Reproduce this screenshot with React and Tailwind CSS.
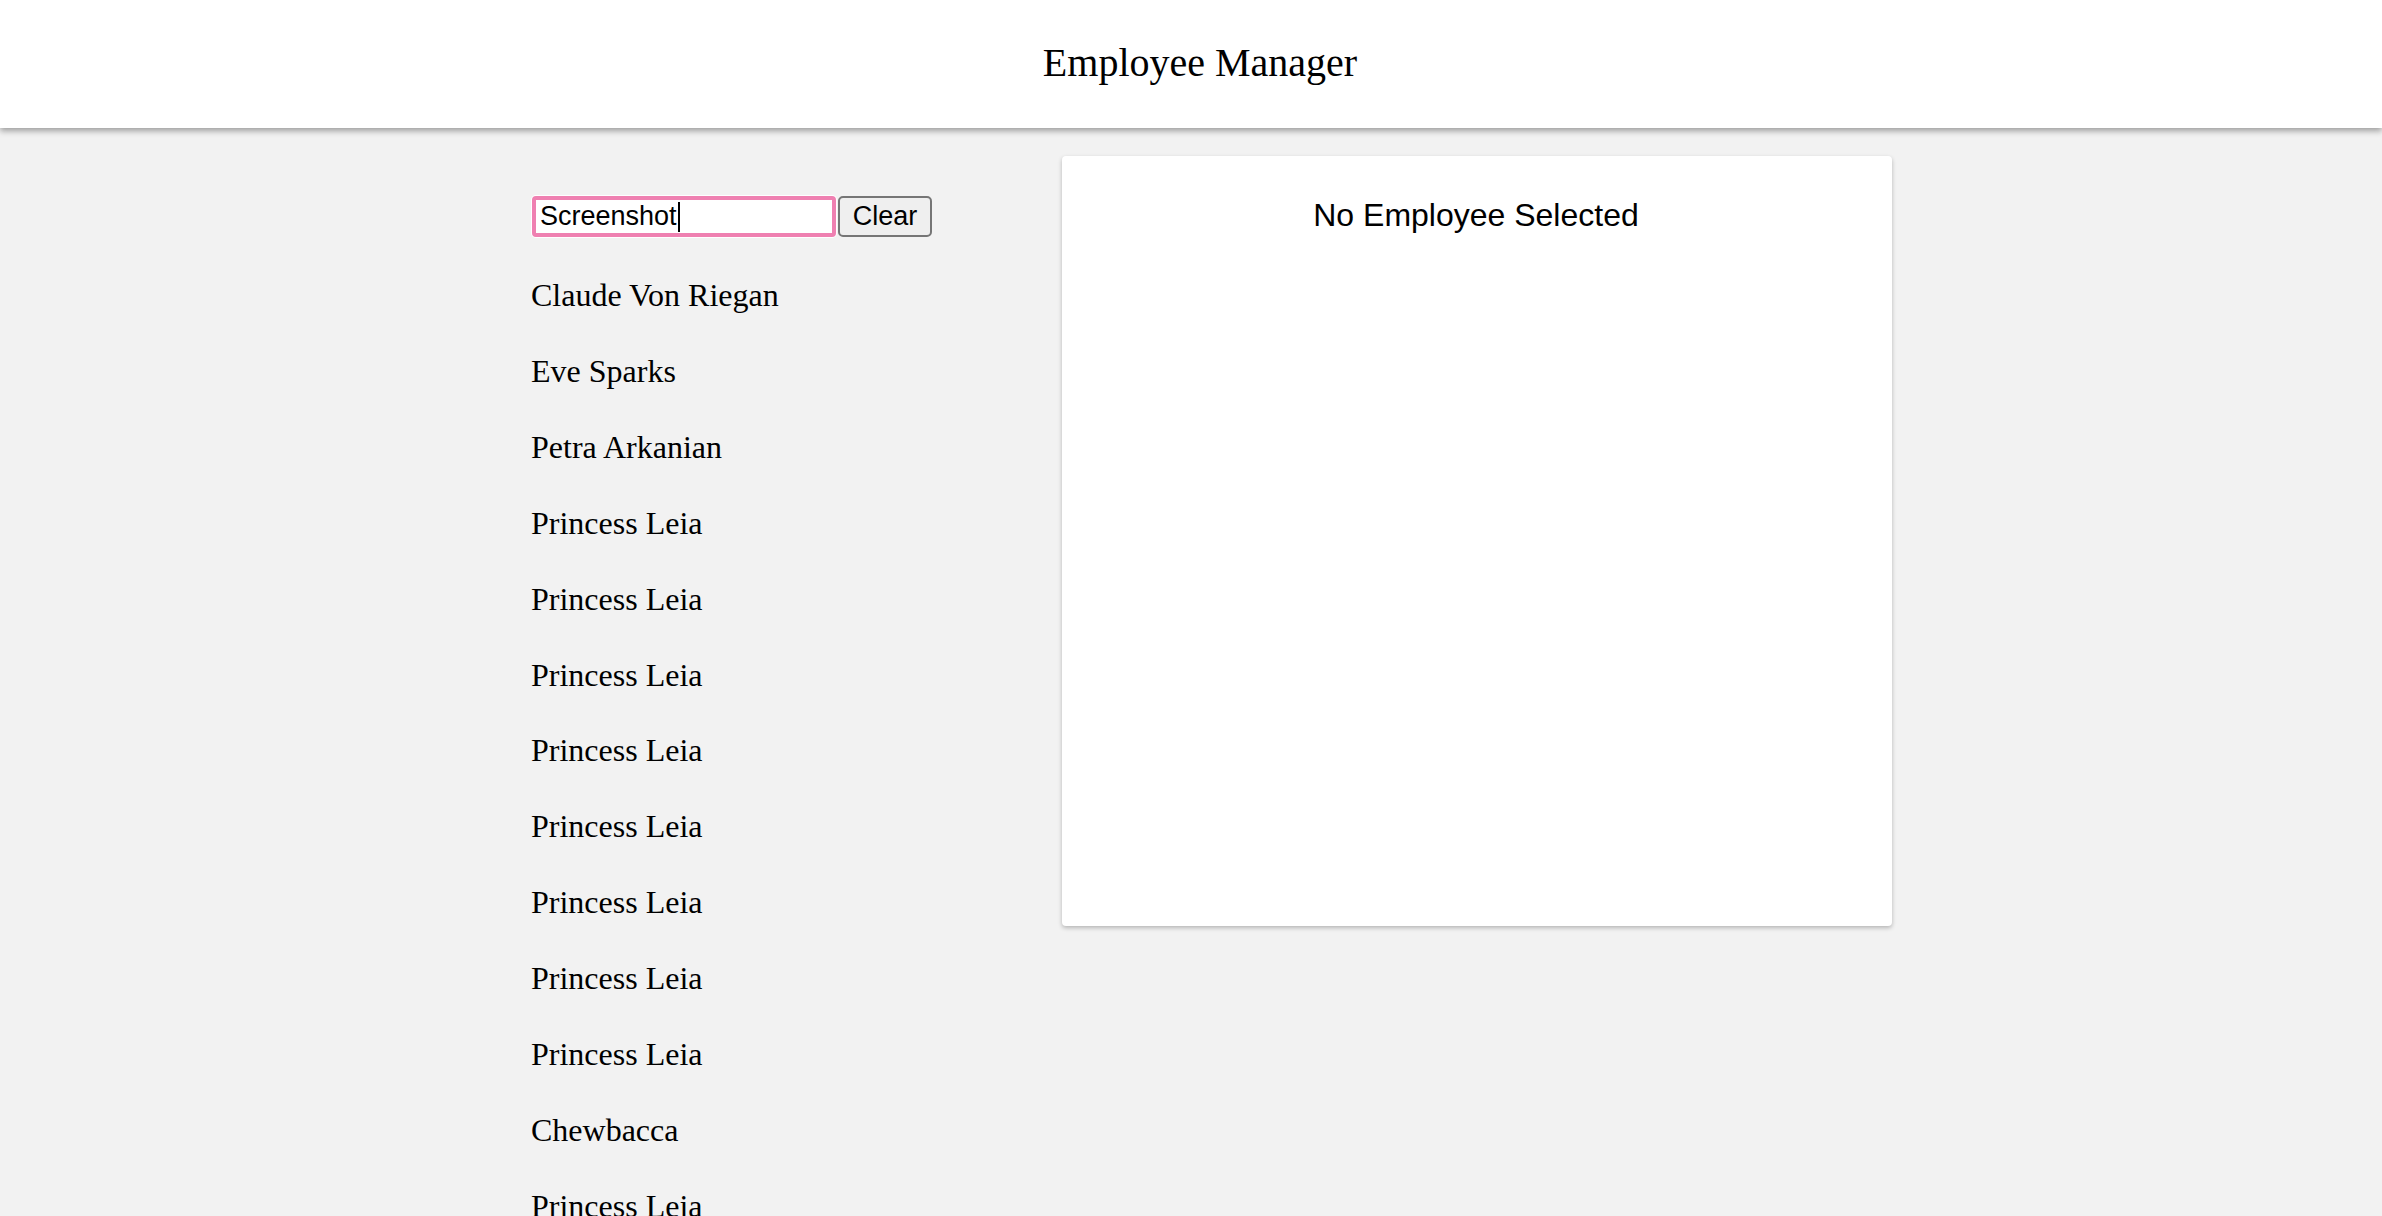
import React from "react";

const names = [
  "Claude Von Riegan",
  "Eve Sparks",
  "Petra Arkanian",
  "Princess Leia",
  "Princess Leia",
  "Princess Leia",
  "Princess Leia",
  "Princess Leia",
  "Princess Leia",
  "Princess Leia",
  "Princess Leia",
  "Chewbacca",
  "Princess Leia",
];

export default function App() {
  return (
    <div className="h-screen overflow-hidden bg-[#f2f2f2]">
      <header className="relative z-10 flex h-[128px] items-center justify-center bg-white pb-[3px] pl-[18px] shadow-[0_3px_6px_rgba(0,0,0,0.35)]">
        <h1 className="text-[40px] font-normal text-black leading-none" style={{ fontFamily: '"Liberation Serif", serif' }}>
          Employee Manager
        </h1>
      </header>
      <div className="flex pl-[531px] pt-[28px]">
        <div className="w-[531px] shrink-0">
          <div className="mt-[39px] flex items-start">
            <div className="h-[43px] w-[306px] rounded-[5px] bg-white p-[1px]">
              <div className="flex h-full w-full items-center rounded-[4px] border-[4px] border-[#ef80b1] bg-white pl-[4px]">
                <span className="text-[27px] leading-none text-black" style={{ fontFamily: '"Liberation Sans", sans-serif' }}>
                  Screenshot
                </span>
                <span className="ml-[1px] h-[30px] w-[2px] bg-black" />
              </div>
            </div>
            <button className="ml-[1px] mt-[1px] flex h-[41px] w-[94px] items-center justify-center rounded-[5px] border-[2px] border-[#767676] bg-[#efefef] text-[27px] leading-none text-black" style={{ fontFamily: '"Liberation Sans", sans-serif' }}>
              Clear
            </button>
          </div>
          <ul className="mt-[19.5px]" style={{ fontFamily: '"Liberation Serif", serif' }}>
            {names.map((n, i) => (
              <li key={i} className="flex h-[75.85px] items-center text-[32px] leading-none text-black">
                {n}
              </li>
            ))}
          </ul>
        </div>
        <div className="h-[770px] w-[830px] shrink-0 rounded-[4px] bg-white shadow-[0_2px_4px_rgba(0,0,0,0.25)]">
          <div className="flex h-[117px] items-center justify-center pr-[2px] pt-[1px]">
            <span className="text-[32px] leading-none text-black" style={{ fontFamily: '"Liberation Sans", sans-serif' }}>
              No Employee Selected
            </span>
          </div>
        </div>
      </div>
    </div>
  );
}
